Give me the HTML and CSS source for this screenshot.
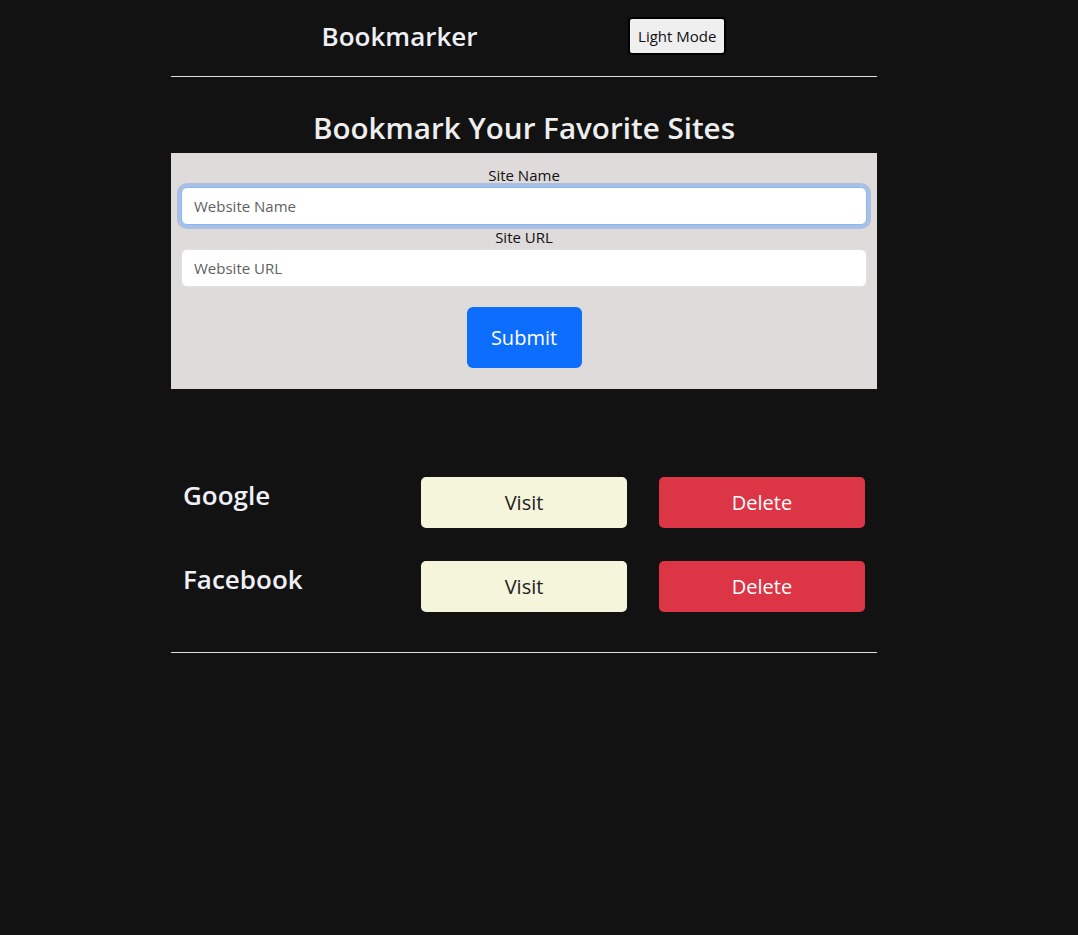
FILE: index.html
```html
<!DOCTYPE html>
<html lang="en">
<head>
<meta charset="utf-8">
<title>Bookmarker</title>
<link rel="stylesheet" href="styles.css">
</head>
<body>
<div class="container">
  <header class="top">
    <h1 class="brand">Bookmarker</h1>
    <button class="mode-btn" type="button">Light Mode</button>
  </header>
  <div class="rule"></div>
  <h2 class="title">Bookmark Your Favorite Sites</h2>
  <form class="bm-form">
    <label class="lbl" for="siteName">Site Name</label>
    <input class="field focused" id="siteName" type="text" placeholder="Website Name">
    <label class="lbl" for="siteUrl">Site URL</label>
    <input class="field" id="siteUrl" type="text" placeholder="Website URL">
    <div class="submit-wrap"><button class="submit" type="button">Submit</button></div>
  </form>
  <div class="list">
    <div class="row">
      <h3 class="site">Google</h3>
      <button class="visit" type="button">Visit</button>
      <button class="delete" type="button">Delete</button>
    </div>
    <div class="row">
      <h3 class="site">Facebook</h3>
      <button class="visit" type="button">Visit</button>
      <button class="delete" type="button">Delete</button>
    </div>
  </div>
  <div class="rule"></div>
</div>
</body>
</html>
```
FILE: styles.css
```css
* { box-sizing: border-box; }
html, body { margin: 0; padding: 0; }
body {
  background: #121212;
  color: #eeeeee;
  font-family: "Open Sans", "Noto Sans", sans-serif;
  min-height: 935px;
}
.container {
  width: 706px;
  margin-left: 171px;
}
.top {
  display: flex;
  justify-content: space-evenly;
  align-items: center;
  height: 76px;
  padding-bottom: 4px;
}
.brand {
  margin: 0;
  font-size: 26px;
  font-weight: 600;
  color: #eef0f6;
}
.mode-btn {
  height: 38px;
  padding: 0 8px;
  background: #efefef;
  color: #111;
  border: 2px solid #000;
  border-radius: 4px;
  font-family: inherit;
  font-size: 15px;
}
.rule {
  height: 1px;
  background: #dddddd;
}
.title {
  margin: 0;
  padding-top: 30px;
  line-height: 41px;
  height: 76px;
  text-align: center;
  font-size: 29.6px;
  font-weight: 600;
  color: #eeeeee;
}
.bm-form {
  background: #dfdbdb;
  padding: 10px 10px 21px;
  margin: 0;
}
.lbl {
  display: block;
  text-align: center;
  font-size: 15px;
  line-height: 24px;
  height: 24px;
  color: #111;
}
.field {
  display: block;
  width: 100%;
  height: 38px;
  padding: 6px 12px;
  border: 1px solid #dee2e6;
  border-radius: 6px;
  background: #fff;
  font-family: inherit;
  font-size: 15px;
  color: #212529;
  outline: none;
}
.field::placeholder { color: #5f5f5f; }
.field.focused {
  border-color: #86b7fe;
  box-shadow: 0 0 0 4px rgba(13, 110, 253, 0.25);
}
.submit-wrap {
  display: flex;
  justify-content: center;
  padding-top: 20px;
}
.submit {
  width: 115px;
  height: 61px;
  background: #0d6efd;
  color: #fff;
  border: none;
  border-radius: 6px;
  font-family: inherit;
  font-size: 20px;
}
.list {
  padding: 88px 12px 40px;
  display: flex;
  flex-direction: column;
  gap: 33px;
}
.row {
  display: grid;
  grid-template-columns: 206px 206px 206px;
  column-gap: 32px;
  align-items: start;
}
.site {
  margin: 0;
  font-size: 26px;
  font-weight: 600;
  line-height: 36px;
  color: #eef0f6;
}
.visit, .delete {
  height: 51px;
  border: none;
  border-radius: 5px;
  font-family: inherit;
  font-size: 20px;
}
.visit { background: #f5f5dc; color: #222; }
.delete { background: #dc3545; color: #fff; }
```
